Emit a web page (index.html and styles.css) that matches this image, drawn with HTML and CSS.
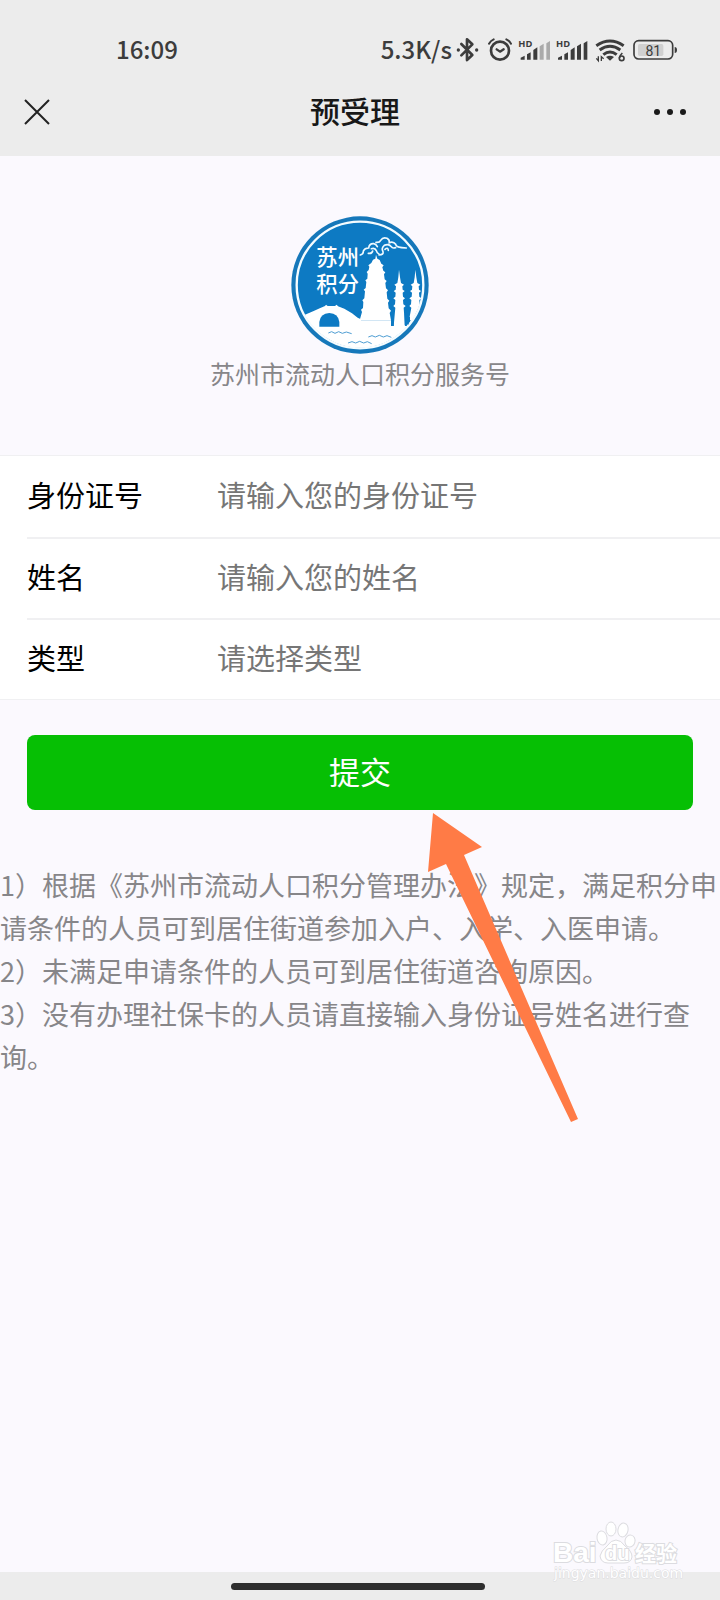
FILE: index.html
```html
<!DOCTYPE html>
<html lang="zh-CN">

<head>
  <meta charset="utf-8">
  <meta name="viewport" content="width=device-width, initial-scale=1">
  <title>预受理</title>
  <link rel="stylesheet" href="styles.css">
</head>

<body>
  <header class="header">
    <div class="status-bar">
      <span class="status-text">16:09</span>
      <div class="status-icons">
        <span class="status-text">5.3K/s</span>
        <!-- bluetooth -->
        <svg width="32" height="26" viewBox="276 50 96 78">
          <path d="M304 71L337 104L321 119V57L337 72L304 105" fill="none" stroke="#3c3c3c" stroke-width="8" stroke-linejoin="round" stroke-linecap="round" />
          <circle cx="295" cy="89" r="5" fill="#3c3c3c" />
          <circle cx="350" cy="89" r="5" fill="#3c3c3c" />
        </svg>
        <!-- alarm -->
        <svg width="32" height="26" viewBox="372 50 96 78">
          <g fill="none" stroke="#3c3c3c" stroke-linecap="round">
            <circle cx="420" cy="91" r="27" stroke-width="8" />
            <path d="M410 87L420 94L431 87" stroke-width="7" stroke-linejoin="round" />
            <path d="M387 70Q392 61 401 57M439 57Q448 61 453 70" stroke-width="6" />
          </g>
        </svg>
        <!-- sim 1 -->
        <svg width="38" height="26" viewBox="468 50 114 78">
          <text class="hd" x="475" y="81">HD</text>
          <g fill="#3c3c3c">
            <path d="M482 118V112L494 106V118ZM501 118V102L512 96V118ZM520 118V89L532 81V118Z" />
            <path d="M539 118V78L551 70V118ZM559 118V69L570 62V118Z" fill="#aaa" />
          </g>
        </svg>
        <!-- sim 2 -->
        <svg width="38" height="26" viewBox="582 50 114 78">
          <text class="hd" x="588" y="81">HD</text>
          <path d="M594 118V112L606 106V118ZM613 118V102L624 96V118ZM632 118V89L644 81V118ZM651 118V78L663 70V118ZM671 118V69L682 62V118Z" fill="#3c3c3c" />
        </svg>
        <!-- wifi -->
        <svg width="37" height="26" viewBox="696 50 111 78">
          <g fill="none" stroke="#3c3c3c" stroke-width="9">
            <path d="M709 76Q750 48 791 76" />
            <path d="M719 89Q750 67 781 89" />
            <path d="M730 103Q750 87 770 103" />
          </g>
          <path d="M738 110Q750 103 762 110L750 121Z" fill="#3c3c3c" />
          <path d="M715 108V121L709 114M724 122V109L731 115" fill="none" stroke="#3c3c3c" stroke-width="4" />
          <path d="M787 98Q778 106 778 114" fill="none" stroke="#3c3c3c" stroke-width="5" />
          <circle cx="785" cy="114" r="7" fill="none" stroke="#3c3c3c" stroke-width="5" />
        </svg>
        <!-- battery -->
        <svg width="50" height="26" viewBox="807 50 150 78">
          <rect x="834" y="71" width="76" height="36" rx="5" fill="#d0d0d0" />
          <rect x="822" y="61" width="116" height="55" rx="14" fill="none" stroke="#3c3c3c" stroke-width="5" />
          <path d="M944 80Q951 80 951 89T944 98Z" fill="#3c3c3c" />
          <text class="battery-level" x="880" y="107">81</text>
        </svg>
      </div>
    </div>
    <div class="nav-bar">
      <button class="nav-button" type="button" aria-label="关闭">
        <svg width="26" height="26" viewBox="0 0 26 26">
          <path d="M1 1L25 25M25 1L1 25" stroke="#222" stroke-width="2" />
        </svg>
      </button>
      <h1 class="nav-title">预受理</h1>
      <button class="nav-button nav-more" type="button" aria-label="更多">
        <svg width="32" height="8" viewBox="0 0 32 8">
          <g fill="#1a1a1a">
            <circle cx="3" cy="4" r="3" />
            <circle cx="16" cy="4" r="3" />
            <circle cx="29" cy="4" r="3" />
          </g>
        </svg>
      </button>
    </div>
  </header>

  <main class="content">
    <div class="brand">
      <svg class="brand-logo" width="138" height="138" viewBox="62 32 414 414">
        <defs>
          <clipPath id="disc">
            <circle cx="269" cy="239" r="188" />
          </clipPath>
        </defs>
        <circle cx="269" cy="239" r="206" fill="#1678ba" />
        <circle cx="269" cy="239" r="190" fill="#0d7ac3" stroke="#f4fcff" stroke-width="7" />
        <g clip-path="url(#disc)" fill="#fff">
          <!-- bridge and shore -->
          <path d="M70 342L104 328L130 317L150 308L164 302L167 298L172 302H194L199 298L203 303L222 310L245 324L262 337L272 342V345H362V362H409L425 340L476 300V446H70Z" />
          <!-- big pagoda -->
          <path d="M268 345L275 320L272 313L278 308L279 290L276 285L282 279L284 258L280 253L286 248L288 230L285 225L291 220L292 205L289 200L295 194L297 184L294 180L303 173L308 163L315 160L317 148L321 160L328 164L333 175L340 180L336 186L339 196L345 201L341 207L343 222L349 227L345 233L347 249L353 255L349 261L351 280L357 286L353 292L355 309L362 316L358 323L362 345Z" />
          <!-- small pagodas -->
          <path d="M386 193L389 216L392 233L401 238L396 243L397 253L403 257L397 262L398 274L404 279L398 284L399 297L406 302L400 307L404 362H370L375 307L369 302L374 297L375 284L369 279L375 274L376 262L370 257L376 253L377 243L372 238L381 233L384 216Z" />
          <path d="M435 193L438 216L441 233L450 238L445 243L446 253L452 257L446 262L447 274L453 279L447 284L448 297L455 302L449 307L449 345H416L423 307L417 302L422 297L423 284L417 279L424 274L425 262L419 257L425 253L426 243L421 238L430 233L433 216Z" />
        </g>
        <g fill="#0d7ac3">
          <path d="M147 364V350Q150 324 177 323Q204 324 207 350V364Z" />
          <path d="M363 345H370V362H363ZM403 325H406V360H403ZM413 335H419V346L413 360Z" />
        </g>
        <!-- water -->
        <g fill="none" stroke="#4f9ed3" stroke-width="3">
          <path d="M174 383L184 379L194 384L205 379L216 384L228 380L244 385" />
          <path d="M294 395L305 391L315 395L327 390L339 395L350 391L363 396" />
          <path d="M233 413L245 409L256 413L268 408L280 413L291 409L304 415" />
        </g>
        <!-- cloud -->
        <g fill="none" stroke="#f0faff" stroke-width="5" stroke-linecap="round">
          <path d="M270 149Q280 146 279 137Q283 128 295 128Q297 114 310 115Q317 116 321 124" />
          <path d="M294 144Q305 146 307 137M303 130Q314 126 318 136Q320 144 326 146" />
          <path d="M317 111Q328 112 331 105Q338 94 350 99Q358 103 357 112Q369 107 376 117Q377 127 408 128" />
          <path d="M326 149Q341 148 338 139Q332 128 342 120Q355 114 363 124Q366 130 376 127M344 132Q353 124 354 135" />
        </g>
        <text class="logo-text" x="138" y="179">苏州</text>
        <text class="logo-text" x="138" y="260">积分</text>
      </svg>
      <p class="brand-name">苏州市流动人口积分服务号</p>
    </div>

    <form class="form">
      <div class="cells">
        <div class="cell">
          <label class="cell-label" for="idNumber">身份证号</label>
          <input class="cell-input" type="text" id="idNumber" placeholder="请输入您的身份证号">
        </div>
        <div class="cell">
          <label class="cell-label" for="userName">姓名</label>
          <input class="cell-input" type="text" id="userName" placeholder="请输入您的姓名">
        </div>
        <div class="cell">
          <label class="cell-label" for="userType">类型</label>
          <select class="cell-input" id="userType">
            <option value="">请选择类型</option>
          </select>
        </div>
      </div>

      <div class="submit-area">
        <button class="submit" type="submit">提交</button>
        <svg class="arrow" width="156" height="310" viewBox="0 0 156 310">
          <path d="M6 0L55 34L37 42L151 306L144 309L19 51L1 59Z" fill="#ff7b46" />
        </svg>
      </div>
    </form>

    <div class="notes">
      <p>1）根据《苏州市流动人口积分管理办法》规定，满足积分申请条件的人员可到居住街道参加入户、入学、入医申请。</p>
      <p>2）未满足申请条件的人员可到居住街道咨询原因。</p>
      <p>3）没有办理社保卡的人员请直接输入身份证号姓名进行查询。</p>
    </div>
  </main>

  <footer class="home-bar">
    <div class="home-handle"></div>
    <svg class="watermark" width="144" height="70" viewBox="0 0 144 70">
      <g fill="#fff" stroke="#dcdce0" stroke-width="1">
        <ellipse cx="53" cy="18" rx="5" ry="7" transform="rotate(-10 53 18)" />
        <ellipse cx="62" cy="9" rx="5" ry="7" />
        <ellipse cx="74" cy="10" rx="5" ry="7" transform="rotate(12 74 10)" />
        <ellipse cx="81" cy="21" rx="5" ry="6" transform="rotate(12 81 21)" />
        <path d="M67 20Q72 20 76 26Q83 31 83 37Q82 43 75 43H59Q52 43 51 36Q52 31 58 26Q62 20 67 20Z" />
      </g>
      <g class="watermark-text">
        <text class="watermark-brand" x="4" y="42">Bai</text>
        <text class="watermark-du" x="56" y="40">du</text>
        <text class="watermark-cn" x="86" y="41">经验</text>
        <text class="watermark-url" x="5" y="58">jingyan.baidu.com</text>
      </g>
    </svg>
  </footer>
</body>

</html>
```

FILE: styles.css
```css
:root {
  --bg-color: #fbf9fe;
  --bar-bg: #ececec;
  --cell-bg: #ffffff;
  --line-color: #f0f0f2;
  --text-color: #000000;
  --placeholder: #767676;
  --secondary-text: #878689;
  --primary-color: #06bf04;
  --status-color: #3c3c3c;
}

* {
  box-sizing: border-box;
}

body {
  display: flex;
  flex-direction: column;
  min-height: 100vh;
  margin: 0;
  font-family: "Noto Sans CJK SC", sans-serif;
  background-color: var(--bg-color);
  color: var(--text-color);
}

h1,
p {
  margin: 0;
}

svg {
  display: block;
}

button {
  border: none;
  font-family: inherit;
  cursor: pointer;
}

/* Header */
.header {
  background-color: var(--bar-bg);
  padding-bottom: 16px;
}

.status-bar {
  display: flex;
  justify-content: space-between;
  align-items: center;
  height: 72px;
  padding: 28px 41px 0 116px;
  font-size: 24px;
  font-weight: 500;
  color: var(--status-color);
}

.status-text {
  padding-bottom: 4px;
}

.status-icons {
  display: flex;
  align-items: center;
}

.hd {
  font: bold 28px "Open Sans", sans-serif;
  fill: var(--status-color);
}

.battery-level {
  font: 42px Roboto, sans-serif;
  fill: var(--status-color);
  text-anchor: middle;
}

.nav-bar {
  display: grid;
  grid-template-columns: 1fr auto 1fr;
  align-items: center;
  height: 68px;
  padding: 12px 34px 0 24px;
}

.nav-button {
  justify-self: start;
  padding: 0;
  background: none;
}

.nav-more {
  justify-self: end;
}

.nav-title {
  padding-bottom: 4px;
  font-size: 30px;
  line-height: 44px;
  font-weight: 500;
  color: #181818;
}

/* Content */
.content {
  flex: 1;
}

.brand {
  display: flex;
  flex-direction: column;
  align-items: center;
  padding: 60px 0 63px;
}

.logo-text {
  font-family: "Liberation Sans", "Noto Sans CJK SC", sans-serif;
  font-size: 64px;
  font-weight: 500;
  fill: #fff;
}

.brand-name {
  font-size: 25px;
  line-height: 38px;
  color: var(--secondary-text);
}

.cells {
  background-color: var(--cell-bg);
  border-top: 1px solid var(--line-color);
  border-bottom: 1px solid var(--line-color);
}

.cell {
  display: flex;
  align-items: center;
  height: 81px;
  margin-left: 27px;
  padding-bottom: 5px;
  font-size: 29px;
}

.cell + .cell {
  border-top: 2px solid var(--line-color);
}

.cell-label {
  width: 190px;
}

.cell-input {
  flex: 1;
  min-width: 0;
  padding: 0;
  border: none;
  outline: none;
  appearance: none;
  background: none;
  font: inherit;
  color: var(--placeholder);
}

.cell-input::placeholder {
  color: var(--placeholder);
}

.submit-area {
  position: relative;
  padding: 35px 27px 0;
}

.submit {
  display: block;
  width: 100%;
  height: 75px;
  padding: 0 0 4px;
  border-radius: 8px;
  background-color: var(--primary-color);
  color: #fff;
  font-size: 31px;
}

/* pointer lying over the notes, tip under the button */
.arrow {
  position: absolute;
  top: 113px;
  left: 427px;
  pointer-events: none;
}

.notes {
  padding-top: 53px;
  font-size: 27px;
  line-height: 43px;
  color: var(--secondary-text);
}

/* Home bar */
.home-bar {
  position: relative;
  display: flex;
  justify-content: center;
  align-items: center;
  height: 28px;
  padding-right: 4px;
  background-color: var(--bar-bg);
}

.home-handle {
  width: 254px;
  height: 7px;
  border-radius: 4px;
  background-color: #2e2e2e;
}

.watermark {
  position: absolute;
  right: 27px;
  bottom: 10px;
}

.watermark-text {
  fill: #fff;
  stroke: #dcdce0;
  stroke-width: 2px;
  paint-order: stroke;
}

.watermark-brand {
  font: bold 28px "Liberation Sans", sans-serif;
}

.watermark-du {
  font: bold 20px "Liberation Sans", sans-serif;
}

.watermark-cn {
  font-size: 21px;
  font-weight: bold;
}

.watermark-url {
  font: 14px "DejaVu Sans", sans-serif;
  stroke-width: 1px;
}
```
